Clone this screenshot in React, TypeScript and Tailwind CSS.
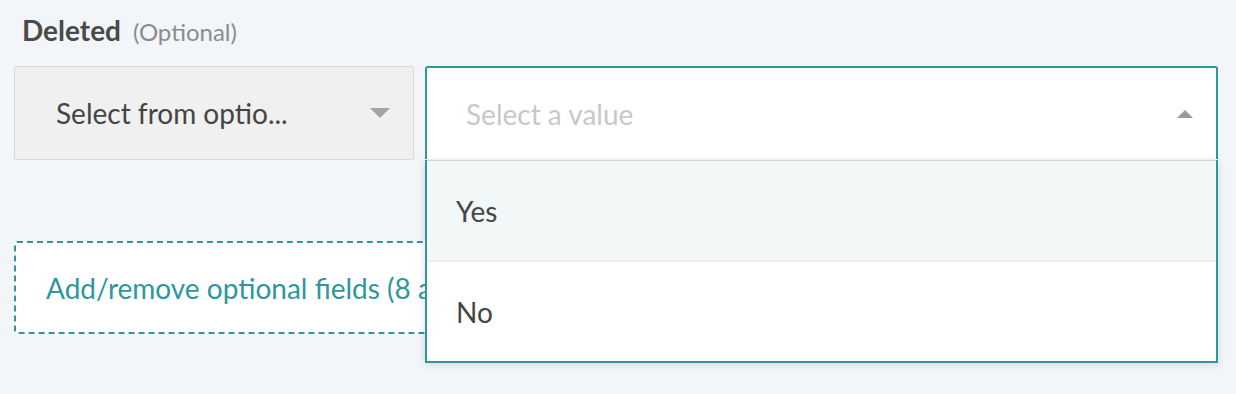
import React from 'react';

const FONT = { fontFamily: 'Lato, "Open Sans", "Liberation Sans", sans-serif' };

function CaretDown() {
  return (
    <svg width="20" height="10" viewBox="0 0 20 10" className="block">
      <path d="M0 0H20L10 10Z" fill="#a3a3a3" />
    </svg>
  );
}

function CaretUp() {
  return (
    <svg width="16" height="8" viewBox="0 0 16 8" className="block">
      <path d="M0 8H16L8 0Z" fill="#999999" />
    </svg>
  );
}

export default function App() {
  const options = ['Yes', 'No'];

  return (
    <div className="w-full h-[394px] bg-[#f2f6f9] px-[14px] pt-[9px] overflow-hidden" style={FONT}>
      {/* Field label */}
      <div className="flex items-baseline pl-[8px] h-[36px]">
        <span className="text-[28px] font-bold text-[#4a4a4a]">Deleted</span>
        <span className="ml-[12px] text-[24px] text-[#8c8c8c]">(Optional)</span>
      </div>

      {/* Selects row */}
      <div className="flex gap-[11px] mt-[21px]">
        <div className="w-[400px] h-[94px] flex items-center justify-between bg-[#f0f0f0] border border-[#d9d9d9] rounded-[2px] pl-[41px] pr-[23px]">
          <span className="text-[28px] text-[#454545]">Select from optio...</span>
          <CaretDown />
        </div>

        <div className="relative w-[793px] z-10">
          <div className="h-[93px] flex items-center justify-between bg-white border-2 border-b-0 border-[#2f979b] rounded-t-[3px] pl-[39px] pr-[23px]">
            <span className="text-[28px] text-[#c8c8c8]">Select a value</span>
            <CaretUp />
          </div>
          <div className="absolute left-0 right-0 top-full border-2 border-t-0 border-[#2f979b] bg-white shadow-[0_2px_8px_rgba(0,0,0,0.12)]">
            <div className="border-t border-[#d6d6d6]" />
            {options.map((opt, i) => (
              <div
                key={opt}
                className={`flex items-center pl-[29px] text-[28px] text-[#454545] ${
                  i === 0 ? 'h-[101px] bg-[#f2f7f8] border-b-2 border-[#eceeef]' : 'h-[99px] bg-white'
                }`}
              >
                {opt}
              </div>
            ))}
          </div>
        </div>
      </div>

      {/* Optional fields toggle */}
      <div className="mt-[81px] w-[1203px] h-[93px] flex items-center bg-white border-2 border-dashed border-[#2f979b] rounded-[3px] pl-[30px]">
        <span className="text-[28px] text-[#2f979b] whitespace-nowrap">Add/remove optional fields (8 a</span>
      </div>
    </div>
  );
}
